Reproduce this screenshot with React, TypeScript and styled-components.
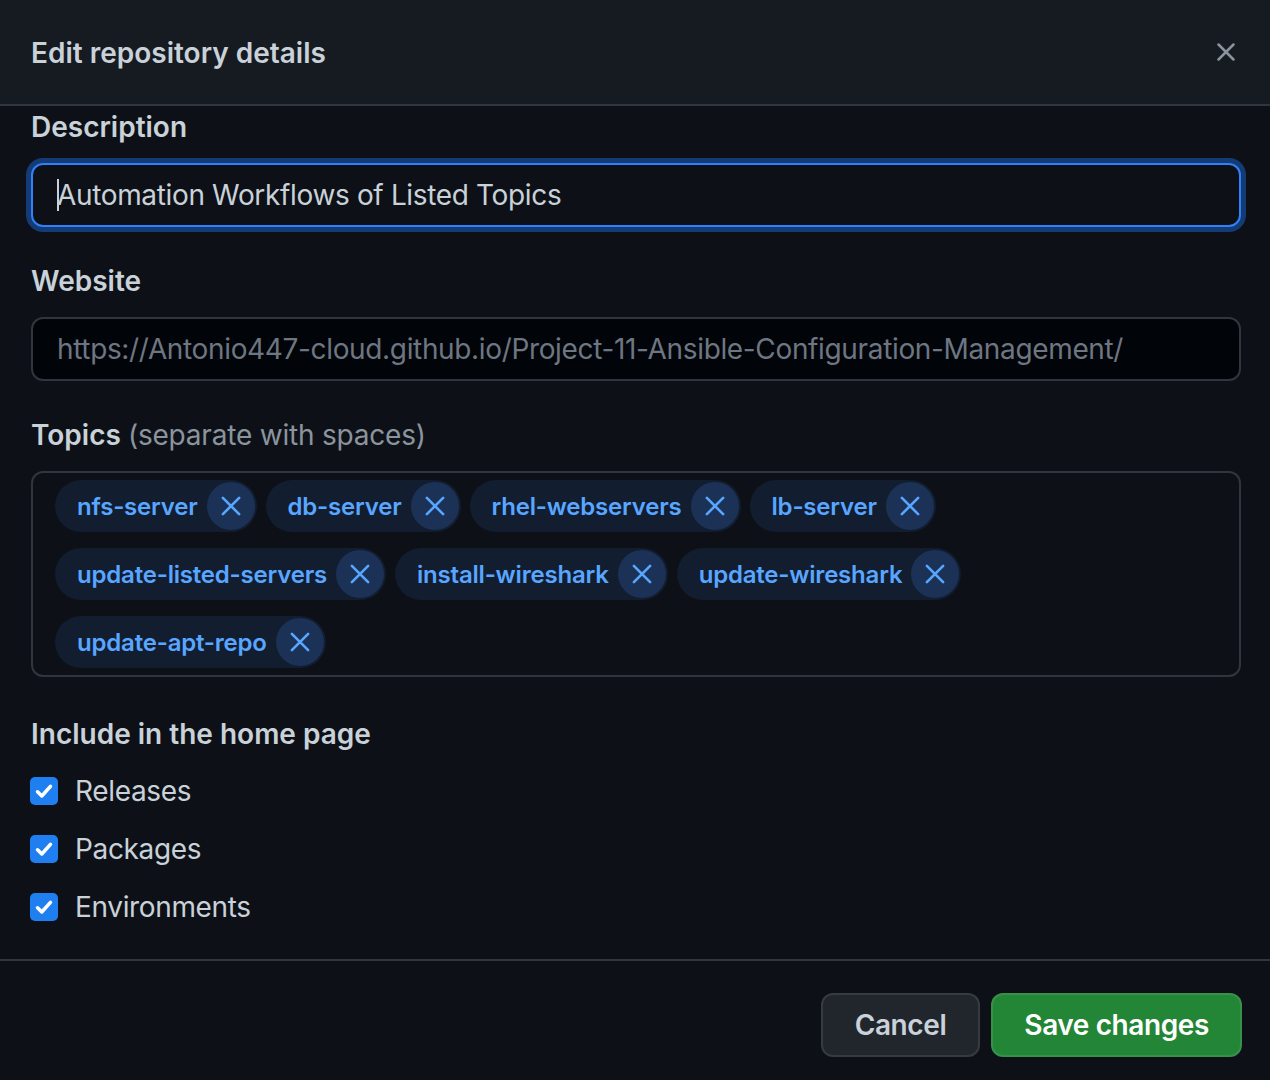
import React from 'react';
import styled, { createGlobalStyle } from 'styled-components';

const GlobalStyle = createGlobalStyle`
  html, body {
    margin: 0;
    padding: 0;
    background: #0d1117;
  }
  body {
    font-family: Inter, "Noto Sans", "Liberation Sans", sans-serif;
    color: #c9d1d9;
  }
  * {
    box-sizing: border-box;
  }
`;

const Dialog = styled.div`
  width: 1270px;
  height: 1080px;
  display: flex;
  flex-direction: column;
  background: #0d1117;
  overflow: hidden;
`;

const Header = styled.header`
  height: 106px;
  flex-shrink: 0;
  display: flex;
  align-items: center;
  justify-content: space-between;
  padding: 0 26px 0 31px;
  background: #161b22;
  border-bottom: 2px solid #30363d;
`;

const Title = styled.h1`
  margin: 0;
  padding-top: 2px;
  font-size: 28px;
  font-weight: 600;
  color: #c9d1d9;
`;

const CloseButton = styled.button`
  width: 36px;
  height: 36px;
  display: flex;
  align-items: center;
  justify-content: center;
  padding: 0;
  border: 0;
  background: transparent;
  color: #8b949e;
  cursor: pointer;
`;

const Body = styled.div`
  flex: 1;
  display: flex;
  flex-direction: column;
  padding: 0 29px 0 31px;
`;

const Label = styled.label<{ $gap?: number }>`
  display: block;
  margin-top: ${({ $gap }) => $gap ?? 0}px;
  margin-bottom: 18px;
  padding-top: 4px;
  font-size: 28px;
  line-height: 35px;
  font-weight: 600;
  color: #c9d1d9;
`;

const Muted = styled.span`
  font-weight: 400;
  letter-spacing: -0.2px;
  color: #8b949e;
`;

const TextInput = styled.div<{ $focused?: boolean; $dim?: boolean }>`
  height: 64px;
  display: flex;
  align-items: center;
  padding: 0 24px;
  border-radius: 12px;
  border: 2px solid ${({ $focused }) => ($focused ? '#2f81f7' : '#30363d')};
  background: ${({ $focused }) => ($focused ? '#0d1117' : '#010409')};
  box-shadow: ${({ $focused }) =>
    $focused ? '0 0 0 5px rgba(31, 111, 235, 0.45)' : 'none'};
  font-size: 28px;
  letter-spacing: -0.35px;
  color: ${({ $dim }) => ($dim ? '#6e7681' : '#c9d1d9')};
  white-space: nowrap;
  overflow: hidden;
`;

const Caret = styled.span`
  display: inline-block;
  width: 2px;
  height: 32px;
  margin-right: -2px;
  background: #c9d1d9;
  vertical-align: middle;
`;

const TopicBox = styled.div`
  display: flex;
  flex-wrap: wrap;
  row-gap: 16px;
  column-gap: 9px;
  padding: 7px 22px;
  border: 2px solid #30363d;
  border-radius: 12px;
  background: #0d1117;
`;

const Topic = styled.span`
  height: 52px;
  display: inline-flex;
  align-items: center;
  gap: 9px;
  padding: 0 2px 0 22px;
  border-radius: 26px;
  background: #121d2f;
  color: #58a6ff;
  font-size: 24px;
  font-weight: 600;
  letter-spacing: -0.2px;
`;

const RemoveTopic = styled.span`
  width: 48px;
  height: 48px;
  display: flex;
  align-items: center;
  justify-content: center;
  border-radius: 50%;
  background: #1b3256;
  color: #58a6ff;
`;

const CheckList = styled.div`
  display: flex;
  flex-direction: column;
  gap: 30px;
  margin-top: 7px;
`;

const CheckRow = styled.label`
  display: flex;
  align-items: center;
  gap: 17px;
  margin-left: -1px;
  font-size: 28px;
  line-height: 28px;
  letter-spacing: -0.35px;
  color: #c9d1d9;
`;

const CheckBox = styled.span`
  width: 28px;
  height: 28px;
  display: flex;
  align-items: center;
  justify-content: center;
  border-radius: 5px;
  background: #1f7ff0;
`;

const Footer = styled.footer`
  display: flex;
  justify-content: flex-end;
  gap: 11px;
  padding: 32px 28px 23px 31px;
  border-top: 2px solid #30363d;
`;

const Button = styled.button<{ $primary?: boolean }>`
  height: 64px;
  padding: 0 ${({ $primary }) => ($primary ? 31 : 32)}px;
  border-radius: 12px;
  border: 2px solid
    ${({ $primary }) => ($primary ? 'rgba(240, 246, 252, 0.1)' : '#363b42')};
  background: ${({ $primary }) => ($primary ? '#238636' : '#21262d')};
  color: ${({ $primary }) => ($primary ? '#ffffff' : '#c9d1d9')};
  font-family: inherit;
  font-size: 28px;
  font-weight: 600;
  letter-spacing: -0.4px;
  cursor: pointer;
`;

const topics = [
  'nfs-server',
  'db-server',
  'rhel-webservers',
  'lb-server',
  'update-listed-servers',
  'install-wireshark',
  'update-wireshark',
  'update-apt-repo',
];

const homeItems = ['Releases', 'Packages', 'Environments'];

function XIcon({ size, stroke }: { size: number; stroke: number }) {
  return (
    <svg width={size} height={size} viewBox="0 0 16 16" fill="none">
      <path
        d="M3 3L13 13M13 3L3 13"
        stroke="currentColor"
        strokeWidth={stroke}
        strokeLinecap="round"
      />
    </svg>
  );
}

export default function App() {
  return (
    <Dialog>
      <GlobalStyle />
      <Header>
        <Title>Edit repository details</Title>
        <CloseButton aria-label="Close">
          <XIcon size={24} stroke={1.7} />
        </CloseButton>
      </Header>
      <Body>
        <Label>Description</Label>
        <TextInput $focused>
          <Caret />
          Automation Workflows of Listed Topics
        </TextInput>

        <Label $gap={33}>Website</Label>
        <TextInput $dim>
          https://Antonio447-cloud.github.io/Project-11-Ansible-Configuration-Management/
        </TextInput>

        <Label $gap={33}>
          Topics <Muted>(separate with spaces)</Muted>
        </Label>
        <TopicBox>
          {topics.map(topic => (
            <Topic key={topic}>
              {topic}
              <RemoveTopic>
                <XIcon size={26} stroke={1.6} />
              </RemoveTopic>
            </Topic>
          ))}
        </TopicBox>

        <Label $gap={36}>Include in the home page</Label>
        <CheckList>
          {homeItems.map(item => (
            <CheckRow key={item}>
              <CheckBox>
                <svg width="22" height="22" viewBox="0 0 16 16" fill="none">
                  <path
                    d="M3.3 8.6L6.4 11.6L12.7 4.6"
                    stroke="#ffffff"
                    strokeWidth="2.6"
                    strokeLinecap="round"
                    strokeLinejoin="round"
                  />
                </svg>
              </CheckBox>
              {item}
            </CheckRow>
          ))}
        </CheckList>
      </Body>
      <Footer>
        <Button>Cancel</Button>
        <Button $primary>Save changes</Button>
      </Footer>
    </Dialog>
  );
}
